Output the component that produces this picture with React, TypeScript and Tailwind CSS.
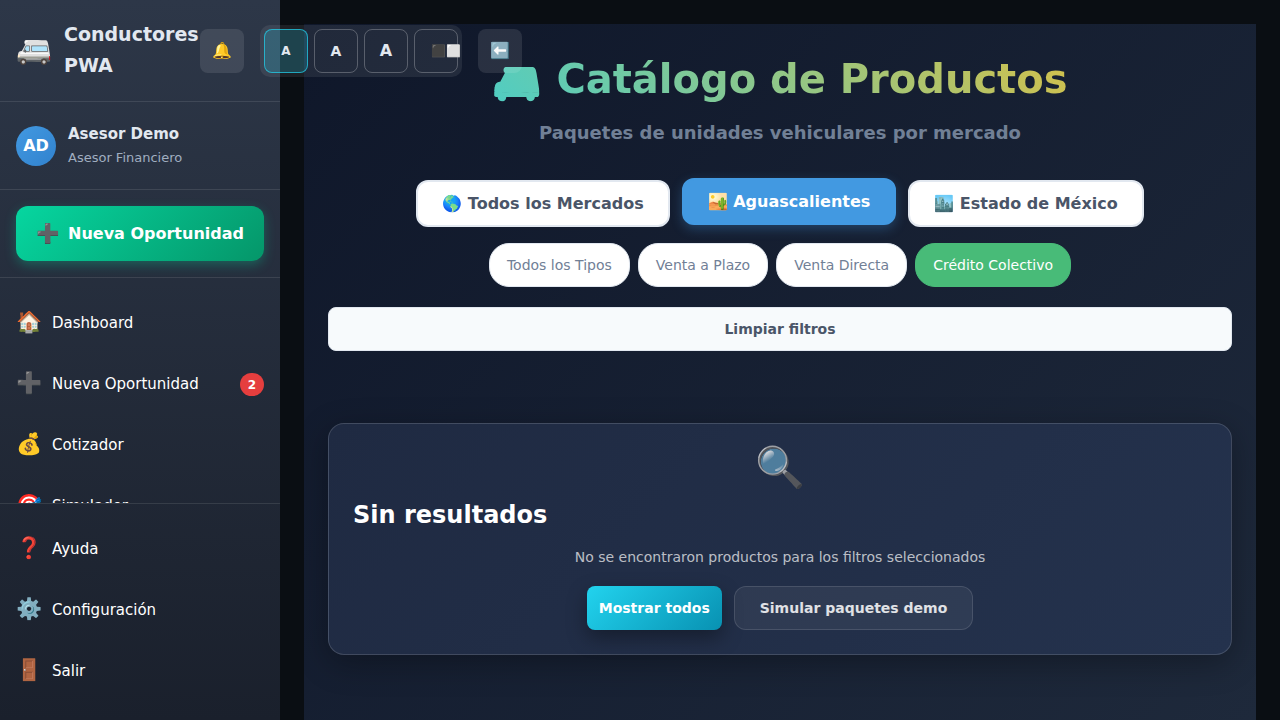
import React from "react";

type NavItem = { icon: string; label: string; badge?: number };

const mainNav: NavItem[] = [
  { icon: "🏠", label: "Dashboard" },
  { icon: "➕", label: "Nueva Oportunidad", badge: 2 },
  { icon: "💰", label: "Cotizador" },
  { icon: "🎯", label: "Simulador" },
];

const footerNav: NavItem[] = [
  { icon: "❓", label: "Ayuda" },
  { icon: "⚙️", label: "Configuración" },
  { icon: "🚪", label: "Salir" },
];

const sizes = [
  { label: "A", name: "Texto pequeño", cls: "text-[12px] bg-[#22d3ee]/20 border-[#22d3ee]/70" },
  { label: "A", name: "Texto mediano", cls: "text-[14px] border-white/25" },
  { label: "A", name: "Texto grande", cls: "text-[16px] border-white/25" },
];

const markets = [
  { label: "🌎 Todos los Mercados", active: false },
  { label: "🏜️ Aguascalientes", active: true },
  { label: "🏙️ Estado de México", active: false },
];

const types = [
  { label: "Todos los Tipos", active: false },
  { label: "Venta a Plazo", active: false },
  { label: "Venta Directa", active: false },
  { label: "Crédito Colectivo", active: true },
];

function NavLink({ item }: { item: NavItem }) {
  return (
    <li className="mb-1">
      <a href="#" className="flex h-[57px] items-center gap-3 px-4 text-[15px] text-white">
        <span className="w-6 shrink-0 pb-px text-[21px] whitespace-nowrap">{item.icon}</span>
        <span className="grow">{item.label}</span>
        {item.badge !== undefined && (
          <span className="flex h-[23px] min-w-6 items-center justify-center rounded-xl bg-[#e53e3e] text-[12px] font-bold">
            {item.badge}
          </span>
        )}
      </a>
    </li>
  );
}

function Sidebar() {
  return (
    <aside className="relative z-10 flex h-full w-[280px] shrink-0 flex-col bg-linear-to-b/srgb from-[#2d3748] to-[#1a202c]">
      <header className="flex shrink-0 items-center border-b border-white/10 px-4 pt-[19px] pb-5">
        <span className="w-9 shrink-0 text-[29px] whitespace-nowrap">🚐</span>
        <h2 className="ml-3 w-[136px] shrink-0 text-[19px] leading-[31px] font-bold text-[#e2e8f0]">
          Conductores PWA
        </h2>
        <div className="-mt-1.5 -mb-2 flex shrink-0 items-center gap-4 text-[#e2e8f0]">
          <button aria-label="Notificaciones" className="size-11 rounded-lg bg-white/10 text-[16px]">
            🔔
          </button>
          <div className="flex gap-1.5 rounded-[10px] bg-white/8 p-1">
            {sizes.map((s) => (
              <button key={s.name} aria-label={s.name} className={`size-11 rounded-lg border font-bold ${s.cls}`}>
                {s.label}
              </button>
            ))}
            <button
              aria-label="Alto contraste"
              className="flex size-11 items-center rounded-lg border border-white/25 pl-4 text-[12px] whitespace-nowrap"
            >
              ⬛⬜
            </button>
          </div>
          <button aria-label="Contraer menú" className="size-11 rounded-lg bg-white/10 text-[16px]">
            ⬅️
          </button>
        </div>
      </header>

      <section className="flex shrink-0 items-center gap-3 border-b border-white/10 px-4 pt-5 pb-[19px]">
        <div className="flex size-10 items-center justify-center rounded-full bg-linear-135/srgb from-[#4299e1] to-[#3182ce] text-[16px] font-bold text-white">
          AD
        </div>
        <div className="leading-6">
          <p className="text-[15px] font-bold text-[#e2e8f0]">Asesor Demo</p>
          <p className="text-[13px] text-[#a0aec0]">Asesor Financiero</p>
        </div>
      </section>

      <section className="shrink-0 border-b border-white/10 p-4">
        <button className="flex h-[55px] w-full items-center justify-center gap-2 rounded-xl bg-linear-135/srgb from-[#06d6a0] to-[#059669] text-[16px] font-bold text-white shadow-[0_4px_12px_rgba(6,214,160,0.3)]">
          <span className="text-[19px]">➕</span>
          <span>Nueva Oportunidad</span>
        </button>
      </section>

      <nav className="min-h-0 grow overflow-hidden pt-[17px]">
        <ul>
          {mainNav.map((i) => (
            <NavLink key={i.label} item={i} />
          ))}
        </ul>
      </nav>

      <nav className="shrink-0 border-t border-white/10 pt-[17px] pb-4">
        <ul>
          {footerNav.map((i) => (
            <NavLink key={i.label} item={i} />
          ))}
        </ul>
      </nav>
    </aside>
  );
}

function Catalog() {
  return (
    <main className="min-w-0 grow px-6 pt-6">
      <div className="h-full overflow-hidden bg-linear-135/srgb from-[#0f172a] to-[#1e293b] px-6 pt-6">
        <div className="text-center">
          <h1 className="inline-block bg-linear-45/srgb from-[#4ecdc4] to-[#d4c04a] bg-clip-text text-[40px] leading-[62px] font-bold text-transparent">
            🚐 Catálogo de Productos
          </h1>
          <p className="mt-[9px] text-[18px] leading-7 font-bold text-[#718096]">
            Paquetes de unidades vehiculares por mercado
          </p>
        </div>

        <div className="mt-[33px] flex justify-center gap-3">
          {markets.map((m) => (
            <button
              key={m.label}
              className={
                m.active
                  ? "h-[47px] -translate-y-0.5 rounded-xl border-2 border-[#4299e1] bg-[#4299e1] px-6 text-[16px] font-bold text-white shadow-[0_4px_12px_rgba(66,153,225,0.3)]"
                  : "h-[47px] rounded-xl border-2 border-[#e2e8f0] bg-white px-6 text-[16px] font-bold text-[#4a5568]"
              }
            >
              {m.label}
            </button>
          ))}
        </div>

        <div className="mt-4 flex justify-center gap-2">
          {types.map((t) => (
            <button
              key={t.label}
              className={
                t.active
                  ? "h-11 rounded-[20px] border border-[#48bb78] bg-[#48bb78] px-[17px] text-[14px] text-white"
                  : "h-11 rounded-[20px] border border-[#e2e8f0] bg-white px-[17px] text-[14px] text-[#718096]"
              }
            >
              {t.label}
            </button>
          ))}
        </div>

        <button className="mt-5 h-11 w-full rounded-lg border border-[#e2e8f0] bg-[#f7fafc] text-[14px] font-bold text-[#4a5568]">
          Limpiar filtros
        </button>

        <section className="mt-[72px] rounded-2xl border border-white/15 bg-linear-135/srgb from-[#1f2a42] to-[#24324d] px-6 pb-6 shadow-[0_8px_32px_rgba(0,0,0,0.3)]">
          <div className="pt-[11px] text-center text-[40px] leading-[64px] opacity-80">🔍</div>
          <h3 className="mt-px text-[24px] leading-[30px] font-bold text-white">Sin resultados</h3>
          <p className="mt-4 text-center text-[14px] leading-[22px] text-white/70">
            No se encontraron productos para los filtros seleccionados
          </p>
          <div className="mt-[18px] flex justify-center gap-3">
            <button className="h-11 rounded-lg bg-linear-135/srgb from-[#22d3ee] to-[#0891b2] px-3 text-[14px] font-bold text-white shadow-[0_8px_20px_rgba(0,0,0,0.35)]">
              Mostrar todos
            </button>
            <button className="h-11 rounded-xl border border-white/12 bg-white/6 px-[25px] text-[14px] font-bold text-white/85">
              Simular paquetes demo
            </button>
          </div>
        </section>
      </div>
    </main>
  );
}

export default function App() {
  return (
    <div className="flex h-screen overflow-hidden bg-[#0a0e13] font-['DejaVu_Sans',sans-serif]">
      <Sidebar />
      <Catalog />
    </div>
  );
}
